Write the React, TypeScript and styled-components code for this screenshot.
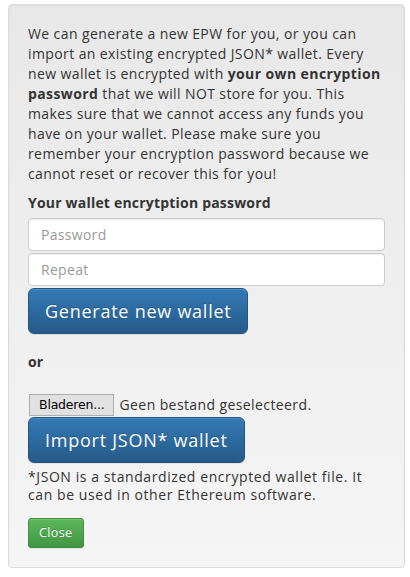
import React from "react";
import styled, { createGlobalStyle } from "styled-components";

const GlobalStyle = createGlobalStyle`
  html, body {
    margin: 0;
    padding: 0;
    background: #ffffff;
  }
  body {
    font-family: "Open Sans", "Liberation Sans", sans-serif;
    font-size: 14px;
    line-height: 20px;
    color: #333333;
  }
  * {
    box-sizing: border-box;
  }
`;

const Page = styled.div`
  padding: 4px 5px 10px 8px;
`;

const Well = styled.div`
  min-height: 20px;
  padding: 19px;
  background-image: linear-gradient(to bottom, #e8e8e8 0, #f5f5f5 100%);
  border: 1px solid #dcdcdc;
  border-radius: 4px;
  box-shadow: inset 0 1px 3px rgba(0, 0, 0, 0.05), 0 1px 0 rgba(255, 255, 255, 0.1);
`;

const Intro = styled.p`
  margin: 0 0 9px;
  letter-spacing: 0.4px;
`;

const Label = styled.label`
  display: block;
  font-weight: 700;
  margin-bottom: 5px;
  letter-spacing: 0.2px;
`;

const Input = styled.input`
  display: block;
  width: 100%;
  height: 33px;
  padding: 6px 12px;
  margin-bottom: 2px;
  font-family: inherit;
  font-size: 14px;
  letter-spacing: 0.3px;
  color: #555555;
  background: #ffffff;
  border: 1px solid #cccccc;
  border-radius: 4px;
  box-shadow: inset 0 1px 1px rgba(0, 0, 0, 0.075);
  outline: none;

  &::placeholder {
    color: #999999;
  }
`;

const BigButton = styled.button`
  display: inline-block;
  padding: 10px 16px;
  font-family: inherit;
  font-size: 18px;
  line-height: 24px;
  letter-spacing: 0.75px;
  color: #ffffff;
  text-shadow: 0 -1px 0 rgba(0, 0, 0, 0.2);
  background-image: linear-gradient(to bottom, #337ab7 0, #265a88 100%);
  border: 1px solid #245580;
  border-radius: 6px;
  box-shadow: inset 0 1px 0 rgba(255, 255, 255, 0.15), 0 1px 1px rgba(0, 0, 0, 0.075);
  cursor: pointer;
`;

const Or = styled.p`
  margin: 18px 0 22px;
  font-weight: 700;
`;

const FileRow = styled.div`
  display: flex;
  align-items: center;
  gap: 6px;
  height: 22px;
  margin-bottom: 1px;
`;

const BrowseButton = styled.span`
  display: inline-flex;
  align-items: center;
  height: 22px;
  margin-left: 1px;
  padding: 0 8px 0 9px;
  font-family: "DejaVu Sans", "Liberation Sans", sans-serif;
  font-size: 12.5px;
  letter-spacing: -0.2px;
  color: #000000;
  background: #e1e1e1;
  border: 1px solid #adadad;
`;

const FileName = styled.span`
  letter-spacing: 0.4px;
`;

const Note = styled.p`
  margin: 5px 0 14px;
  line-height: 18px;
  letter-spacing: 0.58px;
`;

const SmallButton = styled.button`
  display: inline-block;
  padding: 5px 10px;
  font-family: inherit;
  font-size: 12.5px;
  line-height: 18px;
  letter-spacing: 0.4px;
  color: #ffffff;
  text-shadow: 0 -1px 0 rgba(0, 0, 0, 0.2);
  background-image: linear-gradient(to bottom, #5cb85c 0, #419641 100%);
  border: 1px solid #3e8f3e;
  border-radius: 3px;
  box-shadow: inset 0 1px 0 rgba(255, 255, 255, 0.15), 0 1px 1px rgba(0, 0, 0, 0.075);
  cursor: pointer;
`;

export default function App() {
  return (
    <Page>
      <GlobalStyle />
      <Well>
        <Intro>
          We can generate a new EPW for you, or you can import an existing
          encrypted JSON* wallet. Every new wallet is encrypted with{" "}
          <b>your own encryption password</b> that we will NOT store for you.
          This makes sure that we cannot access any funds you have on your
          wallet. Please make sure you remember your encryption password
          because we cannot reset or recover this for you!
        </Intro>
        <Label>Your wallet encrytption password</Label>
        <Input type="password" placeholder="Password" />
        <Input type="password" placeholder="Repeat" />
        <BigButton>Generate new wallet</BigButton>
        <Or>or</Or>
        <FileRow>
          <BrowseButton>Bladeren...</BrowseButton>
          <FileName>Geen bestand geselecteerd.</FileName>
        </FileRow>
        <BigButton>Import JSON* wallet</BigButton>
        <Note>
          *JSON is a standardized encrypted wallet file. It can be used in other
          Ethereum software.
        </Note>
        <SmallButton>Close</SmallButton>
      </Well>
    </Page>
  );
}
